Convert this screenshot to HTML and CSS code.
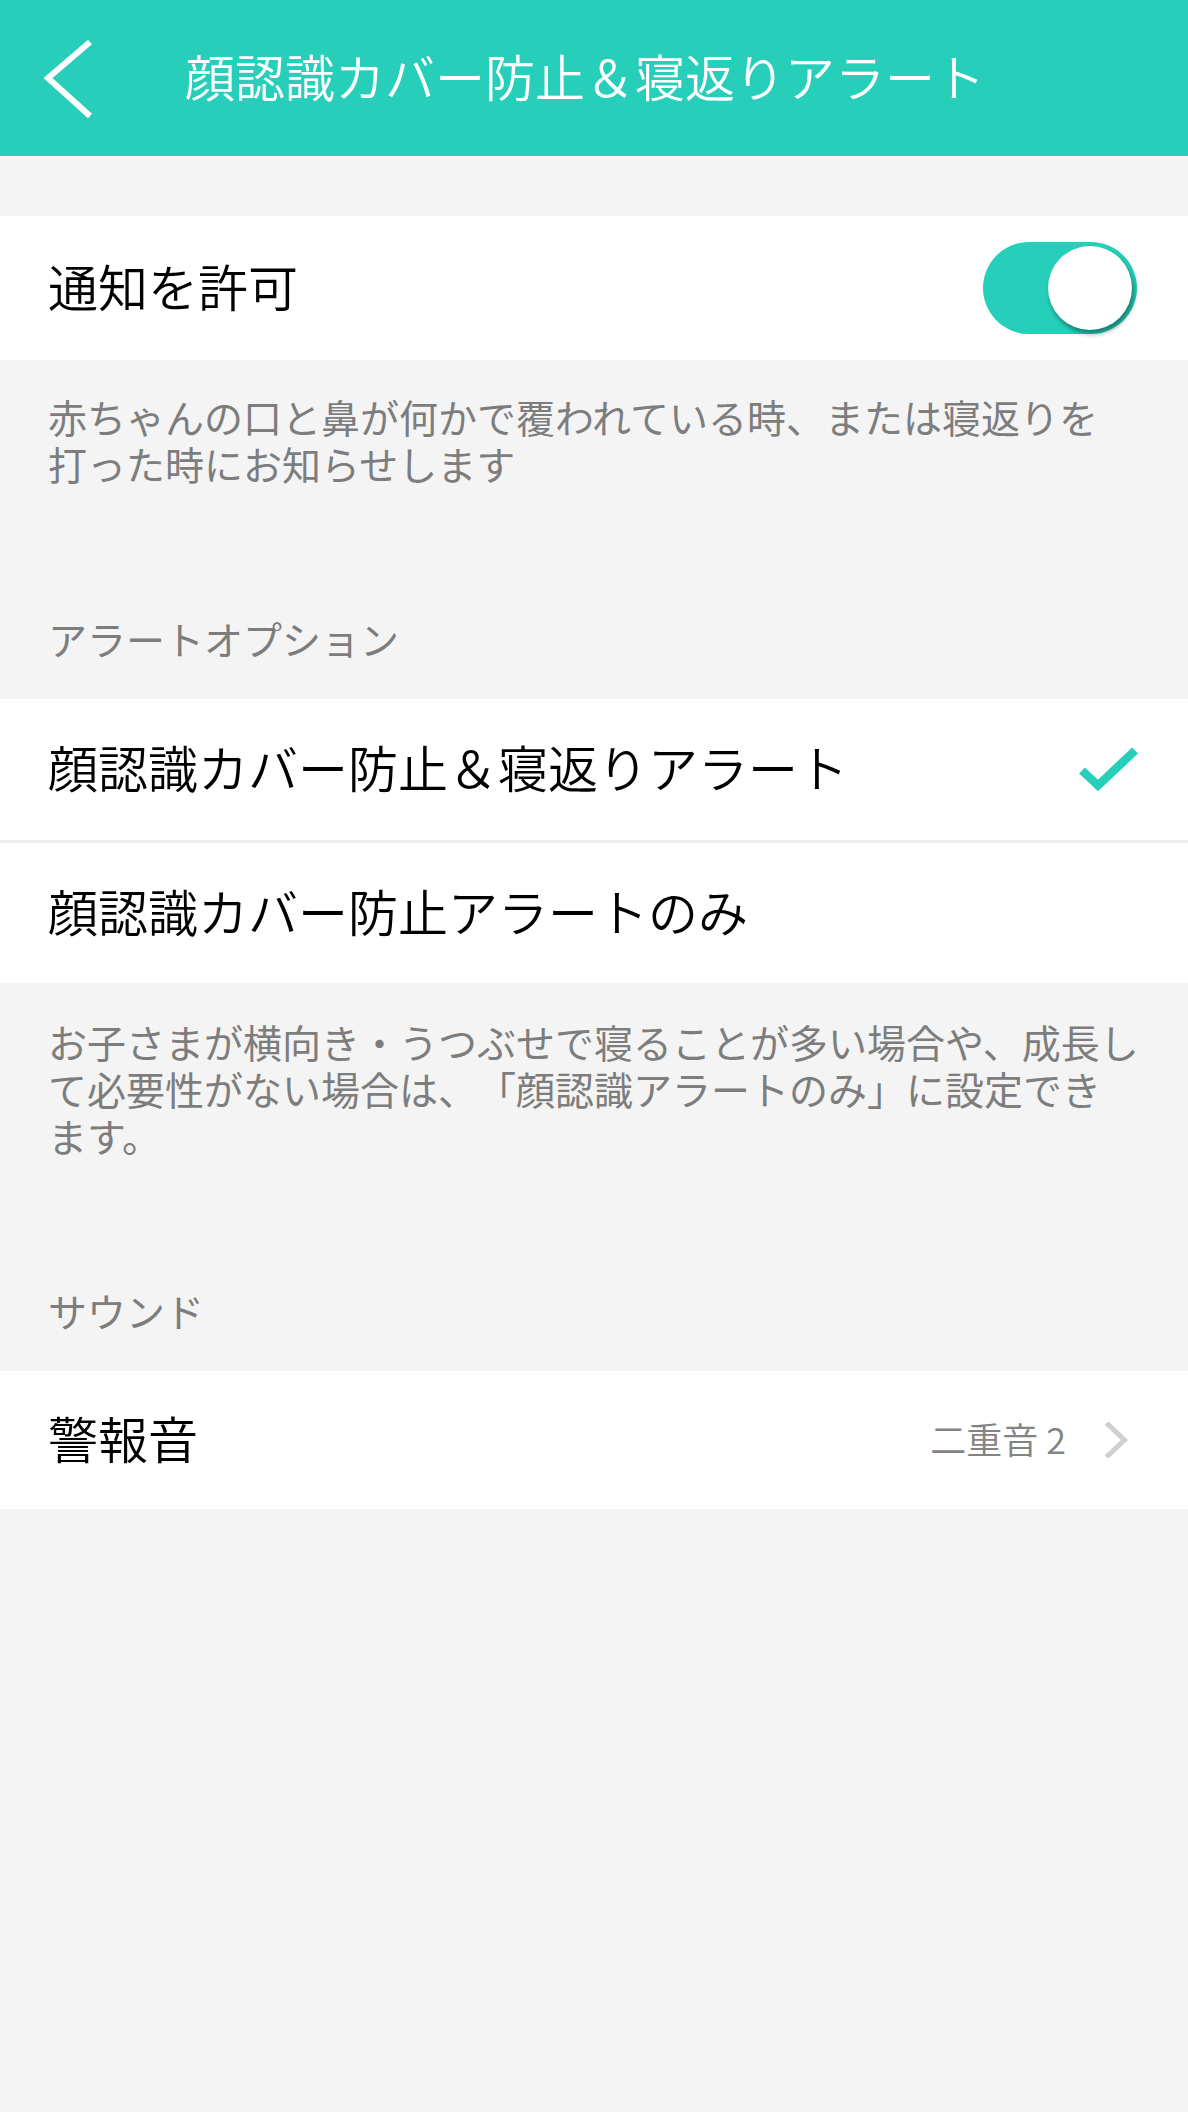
FILE: index.html
```html
<!DOCTYPE html>
<html lang="ja">

<head>
    <meta charset="UTF-8">
    <meta name="viewport" content="width=device-width, initial-scale=1.0">
    <title>顔認識カバー防止＆寝返りアラート</title>
    <link rel="stylesheet" href="styles.css">
</head>

<body>
    <div class="barra_superior">
        <a class="btn_volver" href="#">
            <svg width="56" height="84" viewBox="0 0 56 84">
                <polyline points="50,6 8,42 50,80" fill="none" stroke="#fff" stroke-width="6" />
            </svg>
        </a>
        <h1>顔認識カバー防止＆寝返りアラート</h1>
    </div>

    <div class="contenedor">
        <div class="fila fila_primera">
            <span class="texto">通知を許可</span>
            <label class="interruptor"><span></span></label>
        </div>
        <p class="nota">赤ちゃんの口と鼻が何かで覆われている時、または寝返りを<br>打った時にお知らせします</p>

        <h2 class="titulo_grupo">アラートオプション</h2>
        <div class="fila fila_linea">
            <span class="texto">顔認識カバー防止＆寝返りアラート</span>
            <svg class="marca" width="62" height="48" viewBox="0 0 62 48">
                <polyline points="5,24.5 21,39.5 58,4.5" fill="none" stroke="#26cfb9" stroke-width="8.5" />
            </svg>
        </div>
        <div class="fila">
            <span class="texto">顔認識カバー防止アラートのみ</span>
        </div>
        <p class="nota nota_larga">お子さまが横向き・うつぶせで寝ることが多い場合や、成長し<br>て必要性がない場合は、「顔認識アラートのみ」に設定でき<br>ます。</p>

        <h2 class="titulo_grupo">サウンド</h2>
        <div class="fila fila_sonido">
            <span class="texto">警報音</span>
            <div class="valor">
                <span>二重音 2</span>
                <svg width="28" height="40" viewBox="0 0 28 40">
                    <polyline points="4.5,3 22.5,20 4.5,37" fill="none" stroke="#cfcfd4" stroke-width="5" />
                </svg>
            </div>
        </div>
    </div>
</body>

</html>
```

FILE: styles.css
```css
* {
    padding: 0;
    margin: 0;
    box-sizing: border-box;
}

body {
    background: #f4f4f4;
    font-family: "Noto Sans CJK JP", "Noto Sans", sans-serif;
    font-weight: 350;
    color: #000;
    text-spacing-trim: space-all;
}

.barra_superior {
    height: 156px;
    background: #27cfbb;
    display: flex;
    align-items: center;
    padding-left: 40px;
}

.btn_volver {
    display: block;
    width: 56px;
    height: 84px;
}

.btn_volver svg {
    display: block;
}

.barra_superior h1 {
    margin-left: 89px;
    margin-bottom: 6px;
    font-size: 50px;
    font-weight: 350;
    line-height: 1;
    color: #fff;
}

.contenedor {
    padding-top: 60px;
}

.fila {
    height: 140px;
    background: #fff;
    display: flex;
    align-items: center;
    justify-content: space-between;
    padding: 0 49px 0 48px;
    font-size: 50px;
    line-height: 1;
}

.fila .texto {
    margin-bottom: 7px;
}

.fila_primera {
    height: 144px;
    padding-right: 51px;
}

.fila_linea {
    height: 144px;
    border-bottom: 3px solid #efeff0;
}

.fila_sonido {
    height: 138px;
    padding-right: 58px;
}

.interruptor {
    width: 154px;
    height: 92px;
    border-radius: 46px;
    background: #26cfb9;
    display: flex;
    align-items: center;
    justify-content: flex-end;
    padding: 0 5px;
    cursor: pointer;
}

.interruptor span {
    width: 84px;
    height: 84px;
    border-radius: 50%;
    background: #fff;
    box-shadow: 2px 4px 5px rgba(0, 0, 0, 0.4);
}

.marca {
    display: block;
}

.nota {
    padding: 33px 20px 0 48px;
    font-size: 39px;
    font-weight: 400;
    line-height: 47px;
    color: #7d7d7d;
}

.nota_larga {
    padding-top: 35px;
}

.titulo_grupo {
    padding: 128px 48px 37px;
    font-size: 39px;
    font-weight: 400;
    line-height: 47px;
    color: #7d7d7d;
}

.valor {
    display: flex;
    align-items: center;
    gap: 36px;
    font-size: 36px;
    color: #838383;
}

.valor span {
    margin-bottom: 4px;
}

.valor svg {
    display: block;
}
```
